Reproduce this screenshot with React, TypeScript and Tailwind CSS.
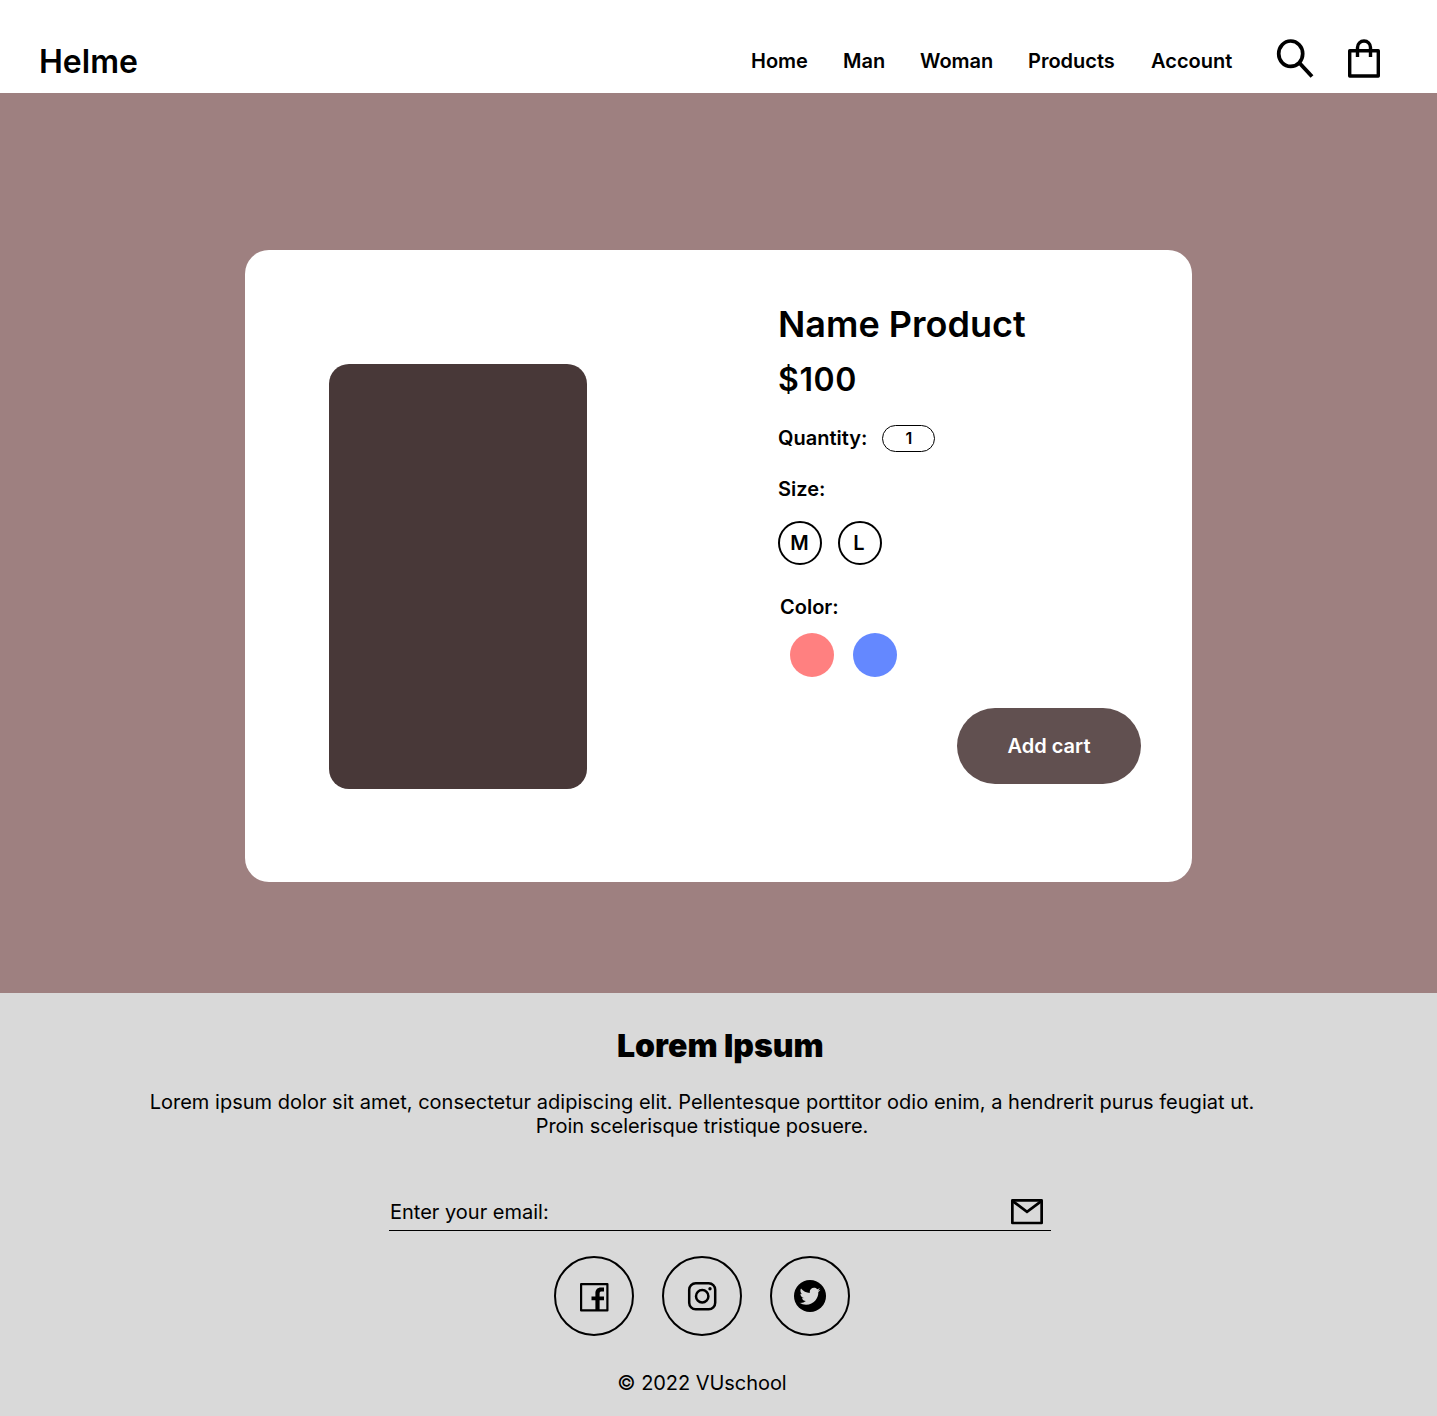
import React from "react";

const nav = [
  { label: "Home", className: "w-[92px]" },
  { label: "Man", className: "w-[77px]" },
  { label: "Woman", className: "w-[108px]" },
  { label: "Products", className: "w-[123px]" },
  { label: "Account", className: "w-[125px]" },
];

function SearchIcon() {
  return (
    <svg className="mt-[38px] h-10 w-10 shrink-0" viewBox="0 0 40 40" fill="none" stroke="black">
      <ellipse cx="14.7" cy="15.7" rx="12" ry="12.7" strokeWidth="3.7" />
      <path d="M23 24.5L36 38.5" strokeWidth="3.9" />
    </svg>
  );
}

function BagIcon() {
  return (
    <svg className="ml-[30px] mt-[38px] h-10 w-9 shrink-0" viewBox="0 0 36 40" fill="none" stroke="black" strokeWidth="3.4">
      <path d="M3.7 12.7H32.3V38H3.7Z" strokeLinejoin="round" />
      <path d="M11.5 19V9.5A6.5 6.5 0 0 1 24.5 9.5V19" />
    </svg>
  );
}

function MailIcon() {
  return (
    <svg className="ml-auto mr-2 mt-[11px] h-[26px] w-8" viewBox="0 0 32 26" fill="none" stroke="black" strokeWidth="2.7">
      <path d="M1.35 1.4H30.65V24H1.35Z" strokeLinejoin="round" />
      <path d="M2 2.3L16 12.8L30 2.3" />
    </svg>
  );
}

function FacebookIcon() {
  return (
    <svg className="h-8 w-8" viewBox="0 0 32 32">
      <path d="M3.1 4.1H29.4V30.4H3.1Z" fill="none" stroke="black" strokeWidth="2.2" strokeLinejoin="round" />
      <path d="M17.4 30.5V20.2H13.5V16.4H17.4V13C17.4 9.8 19.8 7.6 22.7 7.6H26V11.6H23.8C22.3 11.6 21.6 12.2 21.6 13.6V16.4H26V20.2H21.6V30.5Z" />
    </svg>
  );
}

function InstagramIcon() {
  return (
    <svg className="h-8 w-8" viewBox="0 0 32 32" fill="none" stroke="black" strokeWidth="2.5">
      <rect x="3.2" y="3.2" width="26" height="26" rx="6.5" />
      <circle cx="16.2" cy="16.2" r="6.2" />
      <circle cx="24" cy="8.8" r="1.7" fill="black" stroke="none" />
    </svg>
  );
}

function TwitterIcon() {
  return (
    <svg className="h-8 w-8" viewBox="0 0 32 32">
      <circle cx="16" cy="16" r="16" />
      <path transform="translate(4 3.8)" fill="#d9d9d9" d="M22.46 6c-.77.35-1.6.58-2.46.69.88-.53 1.56-1.37 1.88-2.38-.83.5-1.75.85-2.72 1.05C18.37 4.5 17.26 4 16 4c-2.35 0-4.27 1.92-4.27 4.29 0 .34.04.67.11.98C8.28 9.09 5.11 7.38 3 4.79c-.37.63-.58 1.37-.58 2.15 0 1.49.75 2.81 1.91 3.56-.71 0-1.37-.2-1.95-.5v.03c0 2.08 1.48 3.82 3.44 4.21a4.22 4.22 0 0 1-1.93.07 4.28 4.28 0 0 0 4 2.98 8.521 8.521 0 0 1-5.33 1.84c-.34 0-.68-.02-1.02-.06C3.44 20.29 5.7 21 8.12 21 16 21 20.33 14.46 20.33 8.79c0-.19 0-.37-.01-.56.84-.6 1.56-1.36 2.14-2.23z" />
    </svg>
  );
}

export default function App() {
  return (
    <div className="h-[1416px] w-[1437px] overflow-hidden bg-white font-['Inter',sans-serif] text-black">
      <header className="flex h-[93px]">
        <div className="ml-[39px] mt-[42px] w-[712px] text-[32px] font-semibold leading-[39px]">Helme</div>
        <nav className="mt-[49px] flex text-xl font-semibold leading-6">
          {nav.map((n) => (
            <a key={n.label} href="#" className={n.className}>{n.label}</a>
          ))}
        </nav>
        <SearchIcon />
        <BagIcon />
      </header>

      <main className="h-[900px] bg-[#9e8080] pt-[157px]">
        <section className="ml-[245px] flex h-[632px] w-[947px] rounded-3xl bg-white font-semibold">
          <div className="ml-[84px] mt-[114px] h-[425px] w-[258px] rounded-[20px] bg-[#483838]" />
          <div className="ml-[191px] mt-[52px] flex w-[363px] flex-col text-xl leading-6">
            <h1 className="text-4xl leading-[44px]">Name Product</h1>
            <p className="mt-[14px] text-[32px] leading-[39px] tracking-[0.6px]">$100</p>
            <div className="mt-[26px] flex h-[27px]">
              <span className="mt-px">Quantity:</span>
              <span className="ml-[15px] flex h-[27px] w-[53px] justify-center rounded-full border border-black pt-[2px] text-base leading-5">1</span>
            </div>
            <p className="mt-[25px]">Size:</p>
            <div className="mt-5 flex gap-4">
              <span className="flex size-11 items-center justify-center rounded-full border-2 border-black pr-px">M</span>
              <span className="flex size-11 items-center justify-center rounded-full border-2 border-black pr-0.5">L</span>
            </div>
            <p className="ml-[2px] mt-[30px]">Color:</p>
            <div className="ml-3 mt-[14px] flex gap-[19px]">
              <span className="size-11 rounded-full bg-[#ff8080]" />
              <span className="size-11 rounded-full bg-[#6488ff]" />
            </div>
            <button className="mt-[31px] h-[76px] w-[184px] self-end rounded-full bg-[#615050] text-white">Add cart</button>
          </div>
        </section>
      </main>

      <footer className="flex h-[423px] flex-col bg-[#d9d9d9] text-xl leading-6">
        <h2 className="ml-[617px] mt-[33px] text-[32px] font-black leading-[39px]">Lorem Ipsum</h2>
        <p className="mt-[25px] w-[1404px] text-center">
          <span className="tracking-[0.017px]">Lorem ipsum dolor sit amet, consectetur adipiscing elit. Pellentesque porttitor odio enim, a hendrerit purus feugiat ut.</span>
          <br />
          <span className="tracking-[-0.05px]">Proin scelerisque tristique posuere.</span>
        </p>
        <div className="ml-[389px] mt-[50px] flex h-[43px] w-[662px] border-b border-black">
          <span className="ml-px mt-[12px]">Enter your email:</span>
          <MailIcon />
        </div>
        <div className="ml-[554px] mt-[25px] flex gap-7">
          <a href="#" className="flex size-20 items-center justify-center rounded-full border-2 border-black"><FacebookIcon /></a>
          <a href="#" className="flex size-20 items-center justify-center rounded-full border-2 border-black"><InstagramIcon /></a>
          <a href="#" className="flex size-20 items-center justify-center rounded-full border-2 border-black"><TwitterIcon /></a>
        </div>
        <p className="mt-[35px] w-[1404px] text-center tracking-[-0.05px]">© 2022 VUschool</p>
      </footer>
    </div>
  );
}
